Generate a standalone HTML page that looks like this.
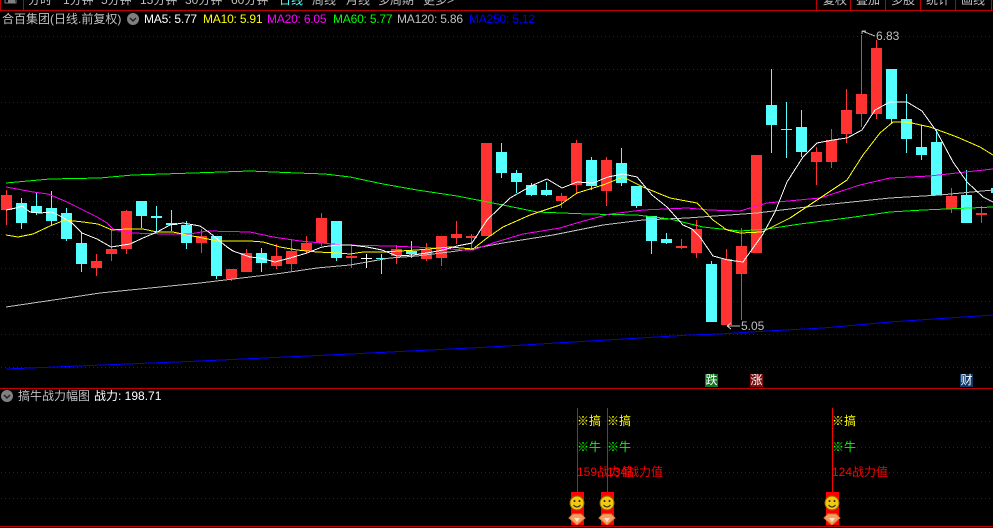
<!DOCTYPE html>
<html>
<head>
<meta charset="utf-8">
<style>
html,body{margin:0;padding:0;background:#000;}
#p{position:relative;width:993px;height:528px;overflow:hidden;background:#000;font-family:"Liberation Sans","WenQuanYi Zen Hei","Noto Sans CJK SC",sans-serif;font-size:12px;}
svg{position:absolute;left:0;top:0;}
.t{position:absolute;white-space:nowrap;line-height:14px;}
.tab{position:absolute;top:-7px;height:17px;line-height:14px;color:#c0c0c0;font-size:12px;white-space:nowrap;}
.lab{font-size:12px;}
.mk{position:absolute;width:13px;height:13px;line-height:13px;text-align:center;color:#fff;font-size:12px;top:374px;}
</style>
</head>
<body>
<div id="p">
<svg width="993" height="528" viewBox="0 0 993 528">
<g stroke="#800000" stroke-width="1" stroke-dasharray="1 3" shape-rendering="crispEdges" fill="none">
<path d="M1 36.5H993M1 69.5H993M1 102.5H993M1 135.5H993M1 168.5H993M1 201.5H993M1 234.5H993M1 268.5H993M1 301.5H993M1 334.5H993M1 367.5H993"/>
<path d="M1 421.5H993M1 447.5H993M1 472.5H993M1 498.5H993"/>
</g>
<g fill="#c00000" shape-rendering="crispEdges">
<rect x="0" y="10" width="993" height="1"/>
<rect x="0" y="388" width="993" height="1"/>
<rect x="0" y="526" width="993" height="1"/>
<rect x="0" y="0" width="1" height="10"/>
<rect x="23" y="0" width="1" height="10"/>
<rect x="816" y="0" width="1" height="10"/>
<rect x="850" y="0" width="1" height="10"/>
<rect x="885" y="0" width="1" height="10"/>
<rect x="920" y="0" width="1" height="10"/>
<rect x="955" y="0" width="1" height="10"/>
<rect x="991" y="0" width="1" height="10"/>
</g>
<path d="M5 0v3h11V0" fill="none" stroke="#808080" shape-rendering="crispEdges"/>
<rect x="8" y="0" width="7" height="3" fill="#808080" shape-rendering="crispEdges"/>
<path shape-rendering="crispEdges" fill="#ff3232" d="M1 195h11v15H1zM6 190h1v35H6zM91 261h11v7H91zM96 254h1v22h-1zM106 249h11v5h-11zM111 230h1v31h-1zM121 211h11v38h-11zM126 210h1v44h-1zM196 236h11v7h-11zM201 229h1v24h-1zM226 269h11v10h-11zM231 269h1v12h-1zM241 253h11v19h-11zM246 249h1v23h-1zM271 256h11v10h-11zM276 244h1v25h-1zM286 251h11v13h-11zM291 239h1v32h-1zM301 243h11v8h-11zM306 236h1v18h-1zM316 218h11v25h-11zM321 213h1v33h-1zM346 256h11v2h-11zM351 245h1v23h-1zM391 249h11v7h-11zM396 245h1v19h-1zM421 249h11v10h-11zM426 243h1v18h-1zM436 236h11v22h-11zM441 236h1v30h-1zM451 234h11v4h-11zM456 221h1v23h-1zM466 236h11v2h-11zM471 234h1v16h-1zM481 143h11v93h-11zM556 196h11v5h-11zM561 193h1v15h-1zM571 143h11v42h-11zM576 140h1v54h-1zM601 160h11v31h-11zM606 157h1v49h-1zM676 246h11v2h-11zM681 239h1v10h-1zM691 229h11v24h-11zM696 220h1v38h-1zM721 259h11v66h-11zM726 249h1v10h-1zM736 246h11v28h-11zM741 228h1v92h-1zM751 155h11v98h-11zM811 152h11v10h-11zM816 147h1v38h-1zM826 140h11v22h-11zM831 129h1v39h-1zM841 110h11v24h-11zM846 89h1v54h-1zM856 94h11v20h-11zM861 35h1v92h-1zM871 48h11v66h-11zM876 40h1v79h-1zM946 196h11v13h-11zM951 188h1v25h-1zM976 213h11v2h-11zM981 206h1v17h-1z"/>
<path shape-rendering="crispEdges" fill="#54ffff" d="M16 203h11v20H16zM21 198h1v31h-1zM31 206h11v7H31zM36 193h1v22h-1zM46 208h11v13H46zM51 191h1v35h-1zM61 213h11v26H61zM66 208h1v33h-1zM76 243h11v21H76zM81 232h1v40h-1zM136 201h11v15h-11zM141 201h1v27h-1zM151 216h11v2h-11zM156 206h1v26h-1zM166 223h11v2h-11zM171 210h1v21h-1zM181 225h11v18h-11zM186 221h1v28h-1zM211 236h11v40h-11zM216 236h1v43h-1zM256 253h11v10h-11zM261 248h1v24h-1zM331 221h11v37h-11zM336 221h1v40h-1zM376 258h11v1h-11zM381 254h1v20h-1zM406 251h11v3h-11zM411 241h1v17h-1zM496 152h11v21h-11zM501 143h1v35h-1zM511 173h11v9h-11zM516 170h1v23h-1zM526 185h11v10h-11zM531 183h1v13h-1zM541 190h11v5h-11zM546 182h1v14h-1zM586 160h11v26h-11zM591 157h1v33h-1zM616 163h11v20h-11zM621 148h1v38h-1zM631 186h11v20h-11zM636 186h1v22h-1zM646 216h11v25h-11zM651 216h1v38h-1zM661 239h11v4h-11zM666 233h1v11h-1zM706 264h11v58h-11zM711 261h1v3h-1zM766 105h11v20h-11zM771 69h1v84h-1zM781 129h11v1h-11zM786 102h1v56h-1zM796 127h11v25h-11zM801 110h1v47h-1zM886 69h11v50h-11zM891 69h1v55h-1zM901 119h11v20h-11zM906 94h1v59h-1zM916 147h11v8h-11zM921 125h1v35h-1zM931 142h11v53h-11zM936 130h1v65h-1zM961 195h11v28h-11zM966 170h1v53h-1zM991 188h2v5h-2z"/>
<path shape-rendering="crispEdges" fill="#fff" d="M361 258h11v1h-11zM366 254h1v14h-1z"/>
<g fill="none" stroke-width="1" shape-rendering="crispEdges">
<polyline stroke="#0000ff" points="6,369 200,361 350,354 490,347 690,335 720,334 767,331 823,328 890,322 993,315"/>
<polyline stroke="#c0c0c0" points="6,307 33,303 67,298 100,293 150,288 200,283 250,277 283,273 317,268 350,265 390,258 417,256 457,251 470,249 503,243 553,235 603,225 643,220 687,218 757,213 823,205 890,198 940,195 993,190"/>
<polyline stroke="#00ff00" points="6,183 50,179 100,178 133,175 193,173 250,171 297,173 325,174 350,177 383,184 417,190 457,196 503,205 537,212 587,214 637,215 670,219 703,227 740,231 767,229 800,224 847,218 890,212 923,210 993,207"/>
<polyline stroke="#ff00ff" points="6,187 17,189 33,192 48,194 67,202 83,210 97,217 107,223 113,229 130,233 167,234 190,234 207,231 250,232 273,237 300,241 343,245 390,246 437,248 463,250 473,250 493,243 523,234 560,228 580,222 610,214 643,210 687,208 710,210 740,211 767,203 820,198 860,185 890,178 930,176 993,169"/>
<polyline stroke="#ffff00" points="6,235 18,237 33,234 50,226 65,220 83,222 98,224 112,230 127,229 143,229 157,232 173,232 187,235 203,238 217,241 250,241 263,242 280,247 297,250 317,252 338,253 350,254 363,252 383,252 417,250 450,247 473,249 487,238 503,227 530,215 560,205 577,193 603,185 623,177 643,187 670,198 697,203 713,220 727,230 740,233 762,232 790,218 820,198 847,180 863,155 880,133 893,122 907,122 930,127 957,137 980,147 993,155"/>
<polyline stroke="#ffffff" points="6,210 16,208 22,206 30,212 40,213 52,212 62,217 72,223 82,233 97,239 111,247 130,244 143,238 157,232 170,225 183,223 200,226 210,233 227,247 233,251 250,257 260,258 275,262 290,258 307,253 322,247 337,245 350,245 367,247 382,250 397,256 413,255 427,253 443,250 457,246 472,243 487,220 510,198 533,185 547,179 562,188 577,182 593,183 608,177 623,174 637,177 652,195 667,207 683,225 692,229 700,237 713,256 728,260 743,262 753,248 763,234 775,212 787,182 803,157 817,143 833,140 847,138 862,130 875,110 890,102 907,102 922,111 937,132 953,162 967,182 983,197 993,202"/>
</g>
<g stroke="#c0c0c0" fill="none" shape-rendering="crispEdges">
<path d="M862 31h4M862 31v3M862 31L875 36"/>
<path d="M727 326h13M727 326l4-3M727 326l4 3"/>
</g>
<g fill="#ff0000" shape-rendering="crispEdges">
<rect x="577" y="408" width="1" height="84"/>
<rect x="607" y="408" width="1" height="84"/>
<rect x="832" y="408" width="1" height="84"/>
<rect x="571" y="492" width="13" height="33"/>
<rect x="601" y="492" width="13" height="33"/>
<rect x="826" y="492" width="13" height="33"/>
</g>
<defs>
<g id="sm">
<circle cx="0" cy="503" r="7" fill="#f4c80f" stroke="#8a6a00" stroke-width="1"/>
<circle cx="-2.5" cy="501" r="1" fill="#222"/>
<circle cx="2.5" cy="501" r="1" fill="#222"/>
<path d="M-3.5 505Q0 509 3.5 505" fill="none" stroke="#222" stroke-width="1"/>
<path d="M-8 518L-4 514H4L8 518L0 525Z" fill="#f0a060" stroke="#e07830" stroke-width="1"/>
<path d="M-3 518H3L0 522Z" fill="#ffe0c0"/>
</g>
</defs>
<use href="#sm" x="577"/>
<use href="#sm" x="607"/>
<use href="#sm" x="832"/>
<circle cx="133" cy="19" r="6" fill="#808080"/>
<path d="M130 18l3 3l3-3" fill="none" stroke="#222" stroke-width="1.5"/>
<circle cx="7" cy="396" r="6" fill="#808080"/>
<path d="M4 395l3 3l3-3" fill="none" stroke="#222" stroke-width="1.5"/>
</svg>

<div class="tab" style="left:28px">分时</div>
<div class="tab" style="left:63px">1分钟</div>
<div class="tab" style="left:101px">5分钟</div>
<div class="tab" style="left:140px">15分钟</div>
<div class="tab" style="left:185px">30分钟</div>
<div class="tab" style="left:231px">60分钟</div>
<div class="tab" style="left:279px;color:#54ffff">日线</div>
<div class="tab" style="left:312px">周线</div>
<div class="tab" style="left:346px">月线</div>
<div class="tab" style="left:378px">多周期</div>
<div class="tab" style="left:423px">更多&gt;</div>
<div class="tab" style="left:823px">复权</div>
<div class="tab" style="left:856px">叠加</div>
<div class="tab" style="left:891px">多股</div>
<div class="tab" style="left:926px">统计</div>
<div class="tab" style="left:961px">画线</div>

<div class="t" style="left:2px;top:12px;color:#c0c0c0">合百集团(日线.前复权)</div>
<div class="t" style="left:144px;top:12px;color:#fff;letter-spacing:-.2px">MA5: 5.77</div>
<div class="t" style="left:203px;top:12px;color:#ff0;letter-spacing:-.2px">MA10: 5.91</div>
<div class="t" style="left:267px;top:12px;color:#f0f;letter-spacing:-.2px">MA20: 6.05</div>
<div class="t" style="left:333px;top:12px;color:#0f0;letter-spacing:-.2px">MA60: 5.77</div>
<div class="t" style="left:397px;top:12px;color:#c0c0c0;letter-spacing:-.2px">MA120: 5.86</div>
<div class="t" style="left:469px;top:12px;color:#00f;letter-spacing:-.2px">MA250: 5.12</div>

<div class="t" style="left:876px;top:29px;color:#c0c0c0">6.83</div>
<div class="t" style="left:741px;top:319px;color:#c0c0c0">5.05</div>

<div class="mk" style="left:705px;background:#0a7a1e">跌</div>
<div class="mk" style="left:750px;background:#7a0f0f">涨</div>
<div class="mk" style="left:960px;background:#0f3a6a">财</div>

<div class="t" style="left:18px;top:389px;color:#c0c0c0">搞牛战力幅图</div>
<div class="t" style="left:94px;top:389px;color:#fff">战力: 198.71</div>

<div class="t lab" style="left:577px;top:414px;color:#ff0">※搞</div>
<div class="t lab" style="left:607px;top:414px;color:#ff0">※搞</div>
<div class="t lab" style="left:832px;top:414px;color:#ff0">※搞</div>
<div class="t lab" style="left:577px;top:440px;color:#0f0">※牛</div>
<div class="t lab" style="left:607px;top:440px;color:#0f0">※牛</div>
<div class="t lab" style="left:832px;top:440px;color:#0f0">※牛</div>
<div class="t lab" style="left:577px;top:465px;color:#f00">159战力值</div>
<div class="t lab" style="left:607px;top:465px;color:#f00">134战力值</div>
<div class="t lab" style="left:832px;top:465px;color:#f00">124战力值</div>
</div>
</body>
</html>
